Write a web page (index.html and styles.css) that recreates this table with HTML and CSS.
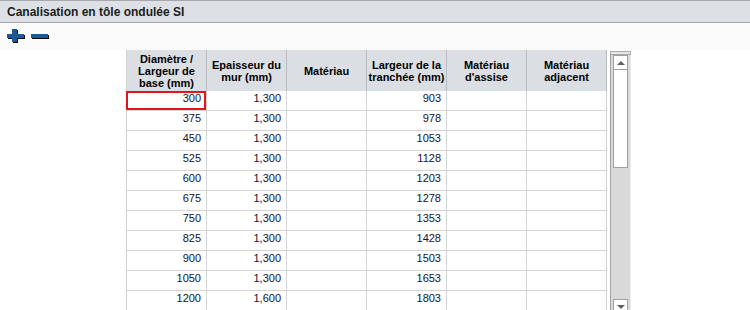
FILE: index.html
```html
<!DOCTYPE html>
<html lang="fr">
<head>
<meta charset="utf-8">
<title>Canalisation en tôle ondulée SI</title>
<link rel="stylesheet" href="styles.css">
</head>
<body>
<div class="titlebar"><span class="title">Canalisation en tôle ondulée SI</span></div>
<div class="toolbar">
  <svg class="tool" width="19" height="15" viewBox="0 0 19 15">
    <rect x="1" y="6" width="17" height="4" fill="#0d0d0d"/>
    <rect x="6" y="1" width="5" height="13" fill="#0d0d0d"/>
    <rect x="0" y="5" width="17" height="4" fill="#1d5894"/>
    <rect x="5" y="0" width="5" height="13" fill="#1d5894"/>
  </svg>
  <svg class="tool" width="19" height="15" viewBox="0 0 19 15">
    <rect x="1" y="6" width="17" height="4" fill="#0d0d0d"/>
    <rect x="0" y="5" width="17" height="4" fill="#1d5894"/>
  </svg>
</div>
<div class="content">
  <div class="grid">
    <div class="hcell">Diamètre /<br>Largeur de<br>base (mm)</div>
    <div class="hcell">Epaisseur du<br>mur (mm)</div>
    <div class="hcell">Matériau</div>
    <div class="hcell">Largeur de la<br>tranchée (mm)</div>
    <div class="hcell">Matériau<br>d'assise</div>
    <div class="hcell">Matériau<br>adjacent</div>

    <div class="cell sel">300</div><div class="cell">1,300</div><div class="cell"></div><div class="cell">903</div><div class="cell"></div><div class="cell"></div>
    <div class="cell">375</div><div class="cell">1,300</div><div class="cell"></div><div class="cell">978</div><div class="cell"></div><div class="cell"></div>
    <div class="cell">450</div><div class="cell">1,300</div><div class="cell"></div><div class="cell">1053</div><div class="cell"></div><div class="cell"></div>
    <div class="cell">525</div><div class="cell">1,300</div><div class="cell"></div><div class="cell">1128</div><div class="cell"></div><div class="cell"></div>
    <div class="cell">600</div><div class="cell">1,300</div><div class="cell"></div><div class="cell">1203</div><div class="cell"></div><div class="cell"></div>
    <div class="cell">675</div><div class="cell">1,300</div><div class="cell"></div><div class="cell">1278</div><div class="cell"></div><div class="cell"></div>
    <div class="cell">750</div><div class="cell">1,300</div><div class="cell"></div><div class="cell">1353</div><div class="cell"></div><div class="cell"></div>
    <div class="cell">825</div><div class="cell">1,300</div><div class="cell"></div><div class="cell">1428</div><div class="cell"></div><div class="cell"></div>
    <div class="cell">900</div><div class="cell">1,300</div><div class="cell"></div><div class="cell">1503</div><div class="cell"></div><div class="cell"></div>
    <div class="cell">1050</div><div class="cell">1,300</div><div class="cell"></div><div class="cell">1653</div><div class="cell"></div><div class="cell"></div>
    <div class="cell">1200</div><div class="cell">1,600</div><div class="cell"></div><div class="cell">1803</div><div class="cell"></div><div class="cell"></div>
  </div>
  <div class="scrollbar">
    <div class="cap"></div>
    <div class="sbody">
      <div class="sbtn"><span class="tri-up"></span></div>
      <div class="thumb"></div>
      <div class="sbtn down"><span class="tri-down"></span></div>
    </div>
  </div>
</div>
</body>
</html>
```
FILE: styles.css
```css
html, body {
  margin: 0;
  padding: 0;
  height: 310px;
  overflow: hidden;
  background: #ffffff;
  font-family: "Liberation Sans", Arial, sans-serif;
}

.titlebar {
  height: 21px;
  border-top: 1px solid #a4a7ab;
  border-bottom: 1px solid #a4a7ab;
  background: #dde1e6;
  display: flex;
  align-items: center;
  padding-left: 7px;
}

.title {
  font-size: 12px;
  font-weight: bold;
  color: #1c1c1c;
  line-height: 14px;
  padding-top: 1px;
}

.toolbar {
  height: 27px;
  box-sizing: border-box;
  background: #fafafa;
  display: flex;
  align-items: flex-start;
  gap: 5px;
  padding: 6px 0 0 7px;
}

.tool {
  display: block;
}

.content {
  height: 264px;
  display: flex;
  align-items: flex-start;
  padding-left: 126px;
  background: #ffffff;
}

.grid {
  display: grid;
  grid-template-columns: repeat(6, 80px);
  grid-template-rows: 41px;
  grid-auto-rows: 20px;
  border-left: 1px solid #d2d2d2;
}

.hcell {
  background: #dbdfe4;
  border-right: 1px solid #b8bcc1;
  box-sizing: border-box;
  display: flex;
  align-items: center;
  justify-content: center;
  text-align: center;
  font-size: 11px;
  font-weight: bold;
  line-height: 12px;
  color: #000;
  white-space: nowrap;
  padding-top: 1px;
}

.cell {
  box-sizing: border-box;
  border-right: 1px solid #d4d4d4;
  border-bottom: 1px solid #d4d4d4;
  text-align: right;
  padding-right: 5px;
  font-size: 11px;
  line-height: 14px;
  color: #12122e;
}

.sel {
  position: relative;
}

.sel::after {
  content: "";
  position: absolute;
  left: -1px;
  top: 0;
  right: 0;
  bottom: 0;
  border: 2px solid #e3141c;
}

.scrollbar {
  margin-left: 3px;
  width: 21px;
  height: 264px;
  display: flex;
  flex-direction: column;
}

.cap {
  margin-top: 1px;
  height: 4px;
  box-sizing: border-box;
  border: 1px solid #a8a8a8;
  background: #e6e6e6;
}

.sbody {
  flex: 1;
  display: flex;
  flex-direction: column;
  box-sizing: border-box;
  border-left: 1px solid #a0a0a0;
  border-right: 1px solid #ebebeb;
  padding: 0 2px 0 2px;
  background: #d9d9d9;
}

.sbtn {
  height: 15px;
  box-sizing: border-box;
  border: 1px solid #a0a0a0;
  background: #ffffff;
  display: flex;
  align-items: center;
  justify-content: center;
}

.sbtn.down {
  margin-top: auto;
}

.thumb {
  height: 99px;
  margin-top: -1px;
  box-sizing: border-box;
  border: 1px solid #a0a0a0;
  background: #ffffff;
}

.tri-up {
  width: 0;
  height: 0;
  border-left: 4px solid transparent;
  border-right: 4px solid transparent;
  border-bottom: 4px solid #606060;
}

.tri-down {
  width: 0;
  height: 0;
  border-left: 4px solid transparent;
  border-right: 4px solid transparent;
  border-top: 4px solid #606060;
}
```
